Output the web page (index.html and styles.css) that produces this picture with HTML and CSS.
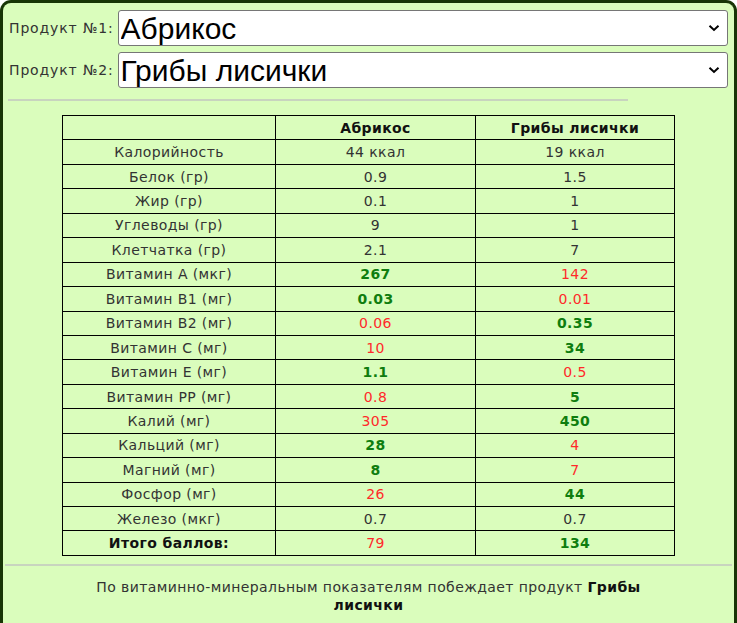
FILE: index.html
```html
<!DOCTYPE html>
<html lang="ru">
<head>
<meta charset="utf-8">
<link rel="stylesheet" href="styles.css">
</head>
<body>
<div class="box">
  <div class="pick">
    <label class="lbl">Продукт №1:</label>
    <span class="selwrap">
      <select class="sel"><option>Абрикос</option></select>
      <svg class="chev" width="12" height="8" viewBox="0 0 12 8"><path d="M1.5 1.8 L6 6 L10.5 1.8" fill="none" stroke="#000" stroke-width="2"/></svg>
    </span>
  </div>
  <div class="pick">
    <label class="lbl">Продукт №2:</label>
    <span class="selwrap">
      <select class="sel"><option>Грибы лисички</option></select>
      <svg class="chev" width="12" height="8" viewBox="0 0 12 8"><path d="M1.5 1.8 L6 6 L10.5 1.8" fill="none" stroke="#000" stroke-width="2"/></svg>
    </span>
  </div>
  <div class="rule short"></div>
  <table class="cmp">
    <colgroup><col class="c1"><col class="c2"><col class="c3"></colgroup>
    <thead>
      <tr><th></th><th>Абрикос</th><th>Грибы лисички</th></tr>
    </thead>
    <tbody>
      <tr><td>Калорийность</td><td>44 ккал</td><td>19 ккал</td></tr>
      <tr><td>Белок (гр)</td><td>0.9</td><td>1.5</td></tr>
      <tr><td>Жир (гр)</td><td>0.1</td><td>1</td></tr>
      <tr><td>Углеводы (гр)</td><td>9</td><td>1</td></tr>
      <tr><td>Клетчатка (гр)</td><td>2.1</td><td>7</td></tr>
      <tr><td>Витамин А (мкг)</td><td class="win">267</td><td class="lose">142</td></tr>
      <tr><td>Витамин В1 (мг)</td><td class="win">0.03</td><td class="lose">0.01</td></tr>
      <tr><td>Витамин В2 (мг)</td><td class="lose">0.06</td><td class="win">0.35</td></tr>
      <tr><td>Витамин С (мг)</td><td class="lose">10</td><td class="win">34</td></tr>
      <tr><td>Витамин Е (мг)</td><td class="win">1.1</td><td class="lose">0.5</td></tr>
      <tr><td>Витамин РР (мг)</td><td class="lose">0.8</td><td class="win">5</td></tr>
      <tr><td>Калий (мг)</td><td class="lose">305</td><td class="win">450</td></tr>
      <tr><td>Кальций (мг)</td><td class="win">28</td><td class="lose">4</td></tr>
      <tr><td>Магний (мг)</td><td class="win">8</td><td class="lose">7</td></tr>
      <tr><td>Фосфор (мг)</td><td class="lose">26</td><td class="win">44</td></tr>
      <tr><td>Железо (мкг)</td><td>0.7</td><td>0.7</td></tr>
      <tr><td class="total">Итого баллов:</td><td class="lose">79</td><td class="win">134</td></tr>
    </tbody>
  </table>
  <div class="rule full"></div>
  <p class="verdict">По витаминно-минеральным показателям побеждает продукт <b>Грибы лисички</b></p>
</div>
</body>
</html>
```
FILE: styles.css
```css
html, body {
  margin: 0;
  padding: 0;
  background: #ffffff;
}
body {
  font-family: "DejaVu Sans", Verdana, sans-serif;
  font-size: 14px;
  letter-spacing: 0.4px;
  color: #333333;
}
.box {
  border: 3px solid #173505;
  border-bottom: 0;
  border-radius: 11px 11px 0 0;
  background: #dafdbc;
  padding: 7px 6px 20px 6px;
  height: 623px;
  box-sizing: border-box;
}
.pick {
  display: flex;
  align-items: center;
  gap: 4px;
  margin-bottom: 6px;
}
.lbl {
  font-size: 14px;
  letter-spacing: 0.85px;
  color: #333333;
  white-space: nowrap;
}
.selwrap {
  position: relative;
  flex: 1;
  display: flex;
}
.sel {
  flex: 1;
  appearance: none;
  -webkit-appearance: none;
  height: 36px;
  font-family: "Liberation Sans", Arial, sans-serif;
  font-size: 30px;
  letter-spacing: 0;
  color: #000000;
  background: #ffffff;
  border: 1px solid #767676;
  border-radius: 3px;
  padding: 0 30px 0 2px;
}
.chev {
  position: absolute;
  right: 8px;
  top: 14px;
  pointer-events: none;
}
.rule {
  border-top: 2px solid #c8d4bf;
}
.rule.short {
  width: 620px;
  margin: 11px 0 0 -1px;
}
.rule.full {
  margin: 8px -4px 0 -4px;
}
.cmp {
  border-collapse: collapse;
  width: 612px;
  margin: 14px auto 0 auto;
  table-layout: fixed;
}
.c1 { width: 213px; }
.c2 { width: 200px; }
.c3 { width: 199px; }
.cmp th, .cmp td {
  border: 1px solid #000000;
  height: 23.45px;
  padding: 0 4px;
  text-align: center;
  font-size: 14px;
  line-height: 16px;
}
.cmp th {
  color: #111111;
  font-weight: bold;
}
.cmp td:nth-child(2), .cmp th:nth-child(2) {
  border-left: 1px solid #3a3a3a;
}
.win {
  color: #0f7d0f;
  font-weight: bold;
}
.lose {
  color: #ff2a2a;
}
.total {
  font-weight: bold;
  color: #111111;
}
.verdict {
  text-align: center;
  margin: 12px auto 0 auto;
  width: 580px;
  line-height: 18px;
  color: #333333;
}
.verdict b {
  color: #111111;
}
```
